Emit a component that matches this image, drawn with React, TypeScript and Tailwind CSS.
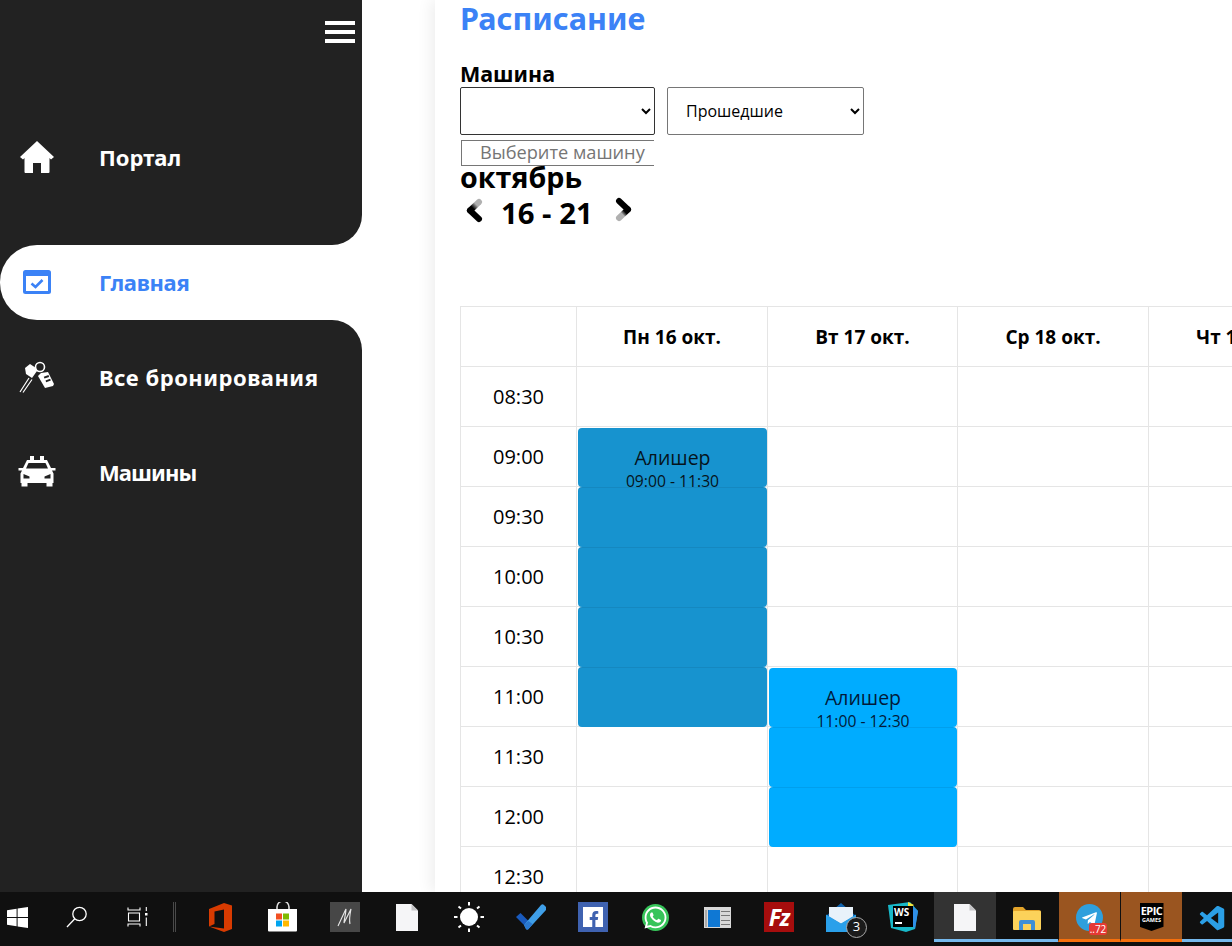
import React from 'react';
import { FaFacebookF, FaWhatsapp, FaTelegramPlane } from 'react-icons/fa';
import { VscVscode } from 'react-icons/vsc';

const SANS = "font-['Open_Sans',sans-serif]";
const NAV = "font-['Noto_Sans',sans-serif]";

function HomeIcon() {
  return (
    <svg width="34" height="32" viewBox="0 0 34 32" fill="#fff">
      <path d="M17 0L34 16l-3 2.500-1.500-1.500V31a1 1 0 0 1-1 1H21V22h-8v10H5.500a1 1 0 0 1-1-1V17L3 18.500 0 16z" />
    </svg>
  );
}

function CalendarCheck() {
  return (
    <svg width="30" height="26" viewBox="0 0 30 26">
      <rect x="1" y="1" width="28" height="24" rx="2.5" fill="#3b82f6" />
      <rect x="4" y="7" width="22" height="15" fill="#fff" />
      <path d="M9.5 14.5l4 3.5 7-7" fill="none" stroke="#3b82f6" strokeWidth="2.6" />
    </svg>
  );
}

function KeysIcon() {
  return (
    <svg width="36" height="32" viewBox="0 0 36 32" fill="none">
      <path d="M1 31l9-14M4 31.5l9-13" stroke="#fff" strokeWidth="1.2" />
      <path d="M6 7l5-4 6 4 1 3-5 7-6-4z" fill="#fff" />
      <circle cx="21" cy="6" r="4.5" stroke="#fff" strokeWidth="1.6" />
      <path d="M22 12l7-1 6 12-1 2-8 2-7-12z" fill="#fff" />
      <rect x="25" y="15" width="5" height="2" fill="#222" transform="rotate(-20 27 16)" />
      <rect x="26.5" y="18.5" width="5" height="2" fill="#222" transform="rotate(-20 29 19)" />
    </svg>
  );
}

function TaxiIcon() {
  return (
    <svg width="38" height="31" viewBox="0 0 38 31">
      <rect x="12" y="0" width="4" height="4" fill="#fff" />
      <rect x="22" y="0" width="4" height="4" fill="#fff" />
      <path d="M9 4h20l4 8h4.500v2.500H34l1.500 3V27h-1v3.500h-6V27H9.500v3.500h-6V27h-1v-9.500l1.500-3H.5V12H5z" fill="#fff" />
      <path d="M10.500 7L8 12.500h22L27.500 7z" fill="#222" />
      <path d="M5.500 18l6 2.500v2h-6zM32.500 18l-6 2.500v2h6z" fill="#222" />
    </svg>
  );
}

function ChevronLeft() {
  return (
    <svg width="20" height="26" viewBox="0 0 20 26">
      <defs>
        <linearGradient id="chevL" gradientUnits="userSpaceOnUse" x1="14" y1="4" x2="5" y2="12.500">
          <stop offset="0.3" stopColor="#b0b0b0" />
          <stop offset="0.7" stopColor="#000" />
        </linearGradient>
      </defs>
      <path d="M5 12.500L14 21" stroke="#000" strokeWidth="6" strokeLinecap="round" />
      <path d="M14 4L5 12.500" stroke="url(#chevL)" strokeWidth="6" strokeLinecap="round" />
    </svg>
  );
}

function ChevronRight() {
  return (
    <svg width="20" height="26" viewBox="0 0 20 26">
      <defs>
        <linearGradient id="chevR" gradientUnits="userSpaceOnUse" x1="15" y1="12.500" x2="6" y2="21">
          <stop offset="0.3" stopColor="#000" />
          <stop offset="0.6" stopColor="#b0b0b0" />
        </linearGradient>
      </defs>
      <path d="M15 12.500L6 21" stroke="url(#chevR)" strokeWidth="6" strokeLinecap="round" />
      <path d="M6 4L15 12.500" stroke="#000" strokeWidth="6" strokeLinecap="round" />
    </svg>
  );
}

function WindowsLogo() {
  return (
    <svg width="21" height="21" viewBox="0 0 21 21" fill="#fff">
      <path d="M0 3.200l9.600-1.400v8.200H0zM10.600 1.600L21 0v10H10.600zM0 11h9.600v8.200L0 17.800zM10.600 11H21v10l-10.400-1.600z" />
    </svg>
  );
}

function SearchIcon() {
  return (
    <svg width="22" height="22" viewBox="0 0 22 22" fill="none" stroke="#fff" strokeWidth="1.3">
      <circle cx="13.500" cy="8" r="6.700" />
      <path d="M8.800 12.800L1 21" />
    </svg>
  );
}

function TaskViewIcon() {
  return (
    <svg width="21" height="20" viewBox="0 0 21 20" fill="none" stroke="#fff" strokeWidth="1.1">
      <path d="M1 .5V3h12V.5M1 19.500V17h12v2.500M1.500 6h11v8h-11z" />
      <rect x="18" y="6" width="2.500" height="2.500" fill="#fff" stroke="none" />
      <path d="M19.300 0v4M19.300 10.500V19" />
    </svg>
  );
}

function OfficeIcon() {
  return (
    <svg width="24" height="29" viewBox="0 0 24 29">
      <path d="M0 6L15 0l8 2.500v23.500L15 29 0 23.500l15 2V6.500L5.500 8.500v12.500L0 23.500z" fill="#d83b01" />
    </svg>
  );
}

function StoreIcon() {
  return (
    <svg width="30" height="30" viewBox="0 0 30 30">
      <path d="M9 8V5a6 6 0 0 1 12 0v3" fill="none" stroke="#ddd" strokeWidth="1.600" />
      <path d="M0 7h29v21.500a1 1 0 0 1-1 1H1a1 1 0 0 1-1-1z" fill="#fff" />
      <rect x="8" y="11.500" width="6" height="6" fill="#f25022" />
      <rect x="15" y="11.500" width="6" height="6" fill="#7fba00" />
      <rect x="8" y="18.500" width="6" height="6" fill="#00a4ef" />
      <rect x="15" y="18.500" width="6" height="6" fill="#ffb900" />
    </svg>
  );
}

function MarkIcon() {
  return (
    <div className="flex h-[30px] w-[30px] items-center justify-center bg-[#474747]">
      <svg width="16" height="20" viewBox="0 0 16 20" fill="none" stroke="#e8e8e8" strokeWidth="1.100">
        <path d="M1 19C4 13 7 6 9 2c0 5-2 10-2 14 2-4 5-10 7-14-1 5-2 11-1 15" />
      </svg>
    </div>
  );
}

function FileIcon() {
  return (
    <svg width="22" height="27" viewBox="0 0 22 27">
      <path d="M0 0h15.500L22 6.500V27H0z" fill="#f5f5f7" />
      <path d="M15.500 0L22 6.500h-6.500z" fill="#c4c4c6" />
    </svg>
  );
}

function SunIcon() {
  return (
    <svg width="30" height="30" viewBox="0 0 30 30" stroke="#fff" strokeWidth="2">
      <circle cx="15" cy="15" r="9" fill="#fff" stroke="none" />
      <path d="M15 0v3.500M15 26.500V30M0 15h3.500M26.500 15H30M4.500 4.500L7 6.500M25.500 4.500L23 6.500M4.500 25.500L7 23.500M25.500 25.500L23 23.500" />
    </svg>
  );
}

function TodoIcon() {
  return (
    <svg width="30" height="26" viewBox="0 0 30 26">
      <path d="M0 13l4.500-4 8 8-4.500 4z" fill="#195abd" />
      <path d="M8 21L25 1a2 2 0 0 1 3 0l2 2a2 2 0 0 1 0 3L12.500 25a2 2 0 0 1-2.500 0z" fill="#3f9fe8" />
      <path d="M8 21l4.500-4 4 3-4 5a2 2 0 0 1-2.500 0z" fill="#2a78d0" />
    </svg>
  );
}

function WindowCard() {
  return (
    <div className="flex h-[21px] w-[27px] gap-[1px] bg-[#d8d8d8] px-[1px] pb-[1px] pt-[3px]">
      <div className="w-[2px] bg-[#aaa]" />
      <div className="w-[12px] bg-[#0f78d4]" />
      <div className="flex flex-1 flex-col justify-around">
        <div className="h-[1px] bg-[#777]" />
        <div className="h-[1px] bg-[#777]" />
        <div className="h-[1px] bg-[#777]" />
        <div className="h-[1px] bg-[#777]" />
      </div>
    </div>
  );
}

function MailIcon() {
  return (
    <div className="relative h-[29px] w-[30px]">
      <svg width="30" height="29" viewBox="0 0 30 29">
        <path d="M0 13L15 0l15 13-15 6z" fill="#0f62ad" />
        <path d="M3 4h24v10l-12 7-12-7z" fill="#e8f2fa" />
        <path d="M0 11.500l15 9 15-9V29H0z" fill="#2aa0ea" />
      </svg>
      <div className={`absolute -bottom-[6px] -right-[11px] flex h-[21px] w-[21px] items-center justify-center rounded-full border border-[#aaa] bg-[#1b1b1b] text-[13px] text-white ${SANS}`}>3</div>
    </div>
  );
}

function WebStormIcon() {
  return (
    <div className="relative h-[30px] w-[30px]">
      <svg className="absolute inset-0" width="30" height="30" viewBox="0 0 30 30">
        <path d="M0 3L22 0l8 9-3 18-9 3L3 26z" fill="#18b8c9" />
        <path d="M20 0l10 9-3 18-6-8z" fill="#2f8fe8" />
        <path d="M20 0l6 3-6 5z" fill="#f5e63d" />
      </svg>
      <div className="absolute left-[5px] top-[4px] h-[21px] w-[20px] bg-black">
        <div className={`pl-[1px] text-[10px] font-bold leading-[13px] text-white ${SANS}`}>WS</div>
        <div className="ml-[2px] mt-[3px] h-[1.500px] w-[7px] bg-white" />
      </div>
    </div>
  );
}

function ExplorerIcon() {
  return (
    <svg width="28" height="23" viewBox="0 0 28 23">
      <path d="M0 2a2 2 0 0 1 2-2h8l3 3h13a2 2 0 0 1 2 2v2H0z" fill="#e3a42a" />
      <rect x="0" y="4" width="28" height="19" rx="1" fill="#fcd25a" />
      <path d="M6 23v-8a2 2 0 0 1 2-2h12a2 2 0 0 1 2 2v8h-4v-6H10v6z" fill="#3f8fd6" />
    </svg>
  );
}

function TelegramIcon() {
  return (
    <div className="relative h-[27px] w-[27px] rounded-full bg-[#2f9fdc]">
      <FaTelegramPlane className="absolute left-[5px] top-[6px] text-white" size={17} />
      <div className={`absolute -bottom-[4px] -right-[4px] flex h-[12px] w-[18px] items-center justify-center rounded-[3px] bg-[#e53935] text-[10px] leading-none text-white ${SANS}`}>..72</div>
    </div>
  );
}

function EpicIcon() {
  return (
    <div className={`flex h-[28px] w-[24px] flex-col items-center bg-black pt-[1px] text-white [clip-path:polygon(0_0,100%_0,100%_85%,50%_100%,0_85%)] ${SANS}`}>
      <span className="text-[11px] font-bold leading-[13px] tracking-[-0.5px]">EPIC</span>
      <span className="text-[5.500px] font-bold leading-[7px]">GAMES</span>
    </div>
  );
}

type TaskItem = {
  key: string;
  icon: React.ReactNode;
  state?: 'active' | 'running' | 'flash';
};

const taskItems: TaskItem[] = [
  { key: 'office', icon: <OfficeIcon /> },
  { key: 'store', icon: <StoreIcon /> },
  { key: 'mark', icon: <MarkIcon /> },
  { key: 'file', icon: <FileIcon /> },
  { key: 'sun', icon: <SunIcon /> },
  { key: 'todo', icon: <TodoIcon /> },
  {
    key: 'fb',
    icon: (
      <div className="flex h-[30px] w-[30px] items-end justify-center bg-[#3f62b0] pb-[5px]">
        <div className="flex h-[20px] w-[20px] items-end justify-end bg-white pr-[1px]">
          <FaFacebookF className="text-[#3f62b0]" size={16} />
        </div>
      </div>
    ),
  },
  {
    key: 'whatsapp',
    icon: (
      <div className="flex h-[27px] w-[27px] items-center justify-center rounded-full bg-[#37c45a]">
        <FaWhatsapp className="text-white" size={25} />
      </div>
    ),
  },
  { key: 'window', icon: <WindowCard /> },
  {
    key: 'filezilla',
    icon: (
      <div className={`flex h-[30px] w-[30px] items-center justify-center bg-[#a60d0d] text-[23px] font-bold italic tracking-[-1px] text-white ${SANS}`}>Fz</div>
    ),
  },
  { key: 'mail', icon: <MailIcon /> },
  { key: 'ws', icon: <WebStormIcon /> },
  { key: 'file2', icon: <FileIcon />, state: 'active' },
  { key: 'explorer', icon: <ExplorerIcon />, state: 'running' },
  { key: 'telegram', icon: <TelegramIcon />, state: 'flash' },
  { key: 'epic', icon: <EpicIcon />, state: 'flash' },
  { key: 'vscode', icon: <VscVscode className="text-[#2b9fe6]" size={30} />, state: 'running' },
];

function Taskbar() {
  return (
    <div className="flex h-[54px] shrink-0 items-start bg-[#101010]">
      <div className="flex h-[50px] w-[47px] shrink-0 items-center pl-[7px]"><WindowsLogo /></div>
      <div className="flex h-[50px] w-[60px] shrink-0 items-center justify-center"><SearchIcon /></div>
      <div className="flex h-[50px] w-[60px] shrink-0 items-center justify-center"><TaskViewIcon /></div>
      <div className="flex h-[50px] w-[23px] shrink-0 items-center gap-[1px] pl-[6px]">
        <div className="h-[30px] w-[1px] bg-[#4a4a4a]" />
        <div className="h-[30px] w-[1px] bg-[#4a4a4a]" />
      </div>
      {taskItems.map((item) => (
        <div
          key={item.key}
          className={
            item.state === 'active'
              ? 'flex h-[50px] w-[62px] shrink-0 items-center justify-center border-b-[3px] border-[#76b9ed] bg-[#333333] pt-[3px]'
              : item.state === 'flash'
              ? 'flex h-[50px] w-[62px] shrink-0 items-center justify-center border-b-[3px] border-l border-[#f7700c] border-l-[#101010] bg-[#9a5520] pt-[3px]'
              : item.state === 'running'
              ? 'flex h-[50px] w-[62px] shrink-0 items-center justify-center pt-[3px] [box-shadow:inset_0_-3px_0_#76b9ed,inset_6px_0_0_#101010,inset_-6px_0_0_#101010]'
              : 'flex h-[50px] w-[62px] shrink-0 items-center justify-center'
          }
        >
          <div className="relative z-10">{item.icon}</div>
        </div>
      ))}
    </div>
  );
}

function Sidebar() {
  const label = `ml-[26px] text-[22px] font-bold leading-none ${NAV}`;
  return (
    <aside className="flex w-[362px] shrink-0 flex-col bg-white">
      <div className="flex h-[245px] flex-col rounded-br-[30px] bg-[#222222]">
        <div className="ml-auto mr-[7px] mt-[21px] flex w-[30px] flex-col gap-[5px]">
          <div className="h-[4px] bg-white" />
          <div className="h-[4px] bg-white" />
          <div className="h-[4px] bg-white" />
        </div>
        <div className="mt-[79px] flex h-[70px] items-center text-white">
          <div className="flex w-[73px] justify-center"><HomeIcon /></div>
          <span className={label}>Портал</span>
        </div>
      </div>
      <div className="h-[75px] bg-[#222222]">
        <div className="flex h-[75px] items-center rounded-l-[37px] bg-white pb-[2px] text-[#3b82f6]">
          <div className="flex w-[73px] justify-center"><CalendarCheck /></div>
          <span className={`${label} tracking-[-0.3px]`}>Главная</span>
        </div>
      </div>
      <div className="flex-1 rounded-tr-[30px] bg-[#222222] pt-[9px] text-white">
        <div className="flex h-[95px] items-center">
          <div className="flex w-[73px] justify-center"><KeysIcon /></div>
          <span className={`${label} tracking-[0.5px]`}>Все бронирования</span>
        </div>
        <div className="flex h-[95px] items-center">
          <div className="flex w-[73px] justify-center"><TaxiIcon /></div>
          <span className={`${label} tracking-[-0.9px]`}>Машины</span>
        </div>
      </div>
    </aside>
  );
}

const days = ['Пн 16 окт.', 'Вт 17 окт.', 'Ср 18 окт.', 'Чт 19 окт.', 'Пт 20 окт.', 'Сб 21 окт.'];
const times = ['08:30', '09:00', '09:30', '10:00', '10:30', '11:00', '11:30', '12:00', '12:30'];

const cellBorder = 'border border-[#e5e5e5]';

function EventBlock({ first, past, name, range }: { first: boolean; past: boolean; name: string; range: string }) {
  return (
    <div
      className={`absolute -bottom-[1px] left-[1px] right-0 rounded-[4px] ${first ? 'top-[1px]' : 'top-0 shadow-[inset_0_1px_0_rgba(0,0,0,0.07)]'} ${past ? 'bg-[#1793cf]' : 'bg-[#00acff]'}`}
    >
      {first && (
        <div className={`flex flex-col items-center pt-[17px] ${past ? 'text-[#06141c]' : 'text-[#021a3a]'}`}>
          <span className="text-[19.500px] leading-[26px]">{name}</span>
          <span className="text-[15.700px] leading-[20px] whitespace-nowrap">{range}</span>
        </div>
      )}
    </div>
  );
}

function eventFor(rowIdx: number, colIdx: number) {
  if (colIdx === 0 && rowIdx >= 1 && rowIdx <= 5) {
    return { first: rowIdx === 1, past: true, name: 'Алишер', range: '09:00 - 11:30' };
  }
  if (colIdx === 1 && rowIdx >= 5 && rowIdx <= 7) {
    return { first: rowIdx === 5, past: false, name: 'Алишер', range: '11:00 - 12:30' };
  }
  return null;
}

function Schedule() {
  return (
    <table className={`w-[1262px] table-fixed border-collapse text-black ${SANS}`}>
      <colgroup>
        <col className="w-[116px]" />
        <col className="w-[191px]" />
        <col className="w-[190px]" />
        <col className="w-[191px]" />
        <col className="w-[191px]" />
        <col className="w-[191px]" />
        <col className="w-[191px]" />
      </colgroup>
      <thead>
        <tr className="h-[60px]">
          <th className={cellBorder} />
          {days.map((d) => (
            <th key={d} className={`${cellBorder} pt-[1px] text-[19px] font-bold`}>{d}</th>
          ))}
        </tr>
      </thead>
      <tbody>
        {times.map((t, rowIdx) => (
          <tr key={t} className="h-[60px]">
            <td className={`${cellBorder} text-center text-[20px]`}>{t}</td>
            {days.map((d, colIdx) => {
              const ev = eventFor(rowIdx, colIdx);
              return (
                <td key={d} className={`${cellBorder} relative`}>
                  {ev && <EventBlock {...ev} />}
                </td>
              );
            })}
          </tr>
        ))}
      </tbody>
    </table>
  );
}

export default function App() {
  return (
    <div className="flex h-[946px] w-[1232px] flex-col overflow-hidden bg-white">
      <div className="flex min-h-0 flex-1">
        <Sidebar />
        <main className={`ml-[73px] min-w-0 flex-1 overflow-hidden bg-white pl-[25px] shadow-[-4px_0_14px_rgba(0,0,0,0.07)] ${SANS}`}>
          <h1 className={`h-[38px] text-[30.500px] font-bold leading-[36px] text-[#3b82f6] ${NAV}`}>Расписание</h1>
          <label className={`mt-[24px] block h-[25px] text-[21.500px] font-bold leading-[24px] text-black ${NAV}`}>Машина</label>
          <div className="flex gap-[12px]">
            <select className="h-[48px] w-[195px] rounded-[2px] border border-[#333] bg-white px-[18px] text-[16px]" />
            <select className="h-[48px] w-[197px] rounded-[2px] border border-[#767676] bg-white px-[14px] text-[16px] text-black">
              <option>Прошедшие</option>
            </select>
          </div>
          <div className="ml-[1px] mt-[5px] h-[26px] w-[193px] overflow-hidden border border-r-0 border-[#767676] pl-[18px] text-[18.200px] leading-[22px] text-[#757575] whitespace-nowrap">Выберите машину</div>
          <div className="h-[24px] text-[28.700px] font-bold leading-[21px] text-black">октябрь</div>
          <div className="mt-[6px] flex h-[34px] items-center text-black">
            <div className="ml-[5px] w-[36px] -mt-[5px]"><ChevronLeft /></div>
            <span className="pt-[2px] text-[29.300px] font-bold leading-none">16 - 21</span>
            <div className="ml-[20px] -mt-[7px]"><ChevronRight /></div>
          </div>
          <div className="mt-[76px]">
            <Schedule />
          </div>
        </main>
      </div>
      <Taskbar />
    </div>
  );
}
